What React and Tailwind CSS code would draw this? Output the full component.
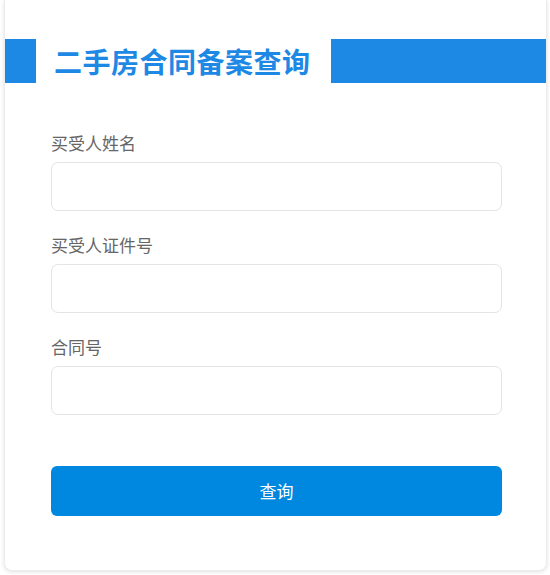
export default function App() {
  const fields = ["买受人姓名", "买受人证件号", "合同号"];
  return (
    <div
      className="w-[550px] h-[575px] bg-white overflow-hidden"
      style={{ fontFamily: '"Microsoft YaHei", "Noto Sans CJK SC", "Noto Sans", sans-serif' }}
    >
      <div className="ml-[4px] w-[543px] h-[571px] bg-white rounded-b-[8px] border-x border-b border-[#ececec] shadow-[0_1px_4px_rgba(0,0,0,0.12)] pt-[39px]">
        <div className="flex items-center h-[44px]">
          <div className="w-[31px] h-[44px] bg-[#1e88e5]" />
          <div className="ml-[18px] mr-[20px] text-[28px] leading-[44px] font-bold text-[#1e88e5] tracking-[0.5px] whitespace-nowrap">
            二手房合同备案查询
          </div>
          <div className="flex-1 h-[44px] bg-[#1e88e5]" />
        </div>
        <div className="pl-[46px] pr-[45px] pt-[48px] flex flex-col">
          {fields.map((f) => (
            <div key={f} className="mb-[22px]">
              <div className="text-[17px] leading-[24px] text-[#666666]">{f}</div>
              <input
                type="text"
                className="mt-[7px] block w-[451px] h-[49px] rounded-[7px] border border-[#e3e3e8] bg-white outline-none"
              />
            </div>
          ))}
          <button className="mt-[29px] block w-[451px] h-[50px] rounded-[6px] bg-[#0088e0] text-white text-[17px]">
            查询
          </button>
        </div>
      </div>
    </div>
  );
}
